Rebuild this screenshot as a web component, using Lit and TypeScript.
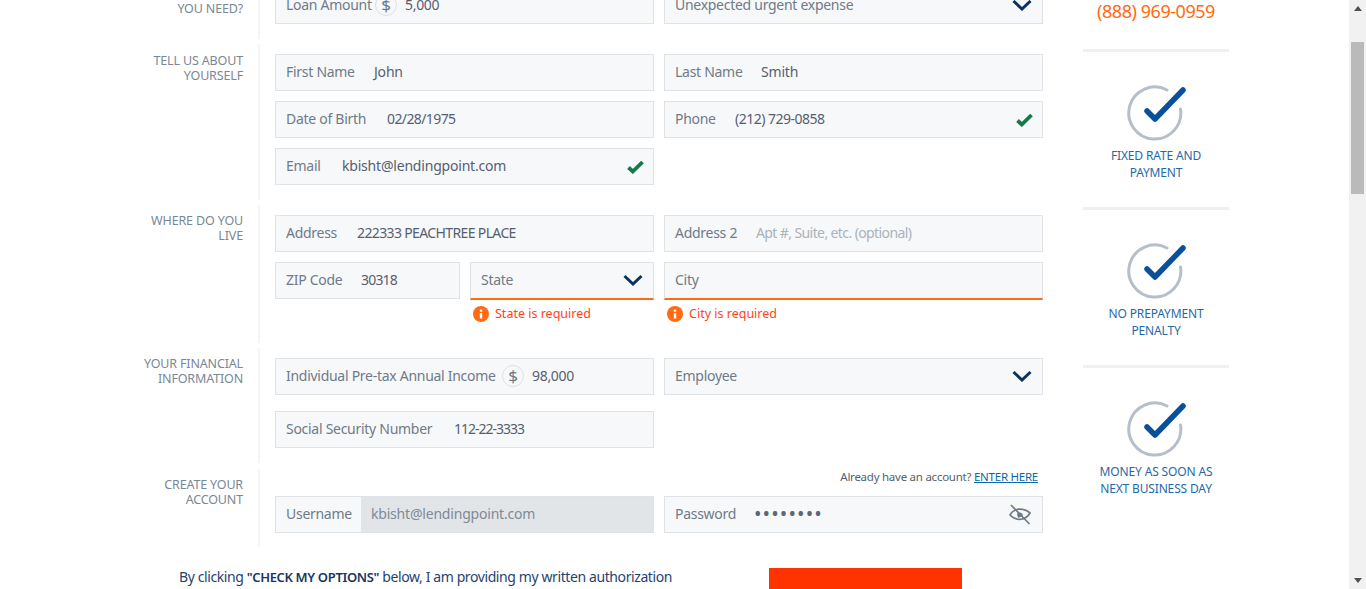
import { LitElement, html, css, svg, nothing } from "lit";
import { customElement } from "lit/decorators.js";

type F = {
  label: string; value?: string; x?: number; ph?: boolean; dollar?: boolean; ok?: boolean;
  select?: boolean; err?: string; eye?: boolean; dots?: boolean; disabled?: boolean; ls?: number;
};

const chevron = html`<svg class="chev" width="20" height="12" viewBox="0 0 20 12"><path d="M1.5 2 L10 10 L18.5 2" fill="none" stroke="#0c335f" stroke-width="3"/></svg>`;
const tick = html`<svg class="tick" width="17" height="14" viewBox="0 0 17 14"><path d="M1.500 7.500 L5.800 11.500 L15.500 2" fill="none" stroke="#147a4a" stroke-width="3.800"/></svg>`;
const eye = html`<svg class="eye" width="22" height="22" viewBox="0 0 22 22" fill="none" stroke="#6f7a85" stroke-width="1.7"><path d="M1 12 C5 5 14 4 21 10 C17 17 8 19 1 12 Z"/><path d="M8 11 C9 9 12 9 13.500 11 L14 13 L9 15 Z" fill="#6f7a85" stroke="none"/><path d="M2 2 L20.500 21"/></svg>`;
const info = html`<svg width="16" height="16" viewBox="0 0 16 16"><circle cx="8" cy="8" r="8" fill="#ff6a13"/><rect x="6.800" y="7" width="2.400" height="5.500" fill="#fff"/><rect x="6.800" y="3.500" width="2.400" height="2.300" fill="#fff"/></svg>`;
const bigCheck = svg`<path d="M42 6 A26 26 0 1 0 55.500 25" fill="none" stroke="#b6bfc9" stroke-width="3" stroke-linecap="round"/><path d="M22 27 L30 35 L58 6" fill="none" stroke="#0a4f9c" stroke-width="5.500" stroke-linecap="round" stroke-linejoin="round"/>`;

@customElement("app-root")
export class AppRoot extends LitElement {
  static styles = css`
    :host { display: block; height: 589px; overflow: hidden; font-family: "Noto Sans", "Open Sans", sans-serif; background: #fff; }
    .page { display: flex; height: 589px; overflow: hidden; }
    .main { width: 1349px; flex: none; overflow: hidden; }
    .content { margin-top: -23px; }
    .top { display: flex; }
    .form { width: 1043px; flex: none; display: flex; flex-direction: column; gap: 5px; }
    .section { display: flex; }
    .s1 { height: 62px; }
    .s2 { height: 156px; }
    .s3 { height: 138px; }
    .s4 { height: 115px; }
    .s5 { height: 78px; margin-top: 1px; }
    .sec-label { width: 243px; flex: none; box-sizing: border-box; padding-top: 9px; text-align: right; font-size: 12.500px; letter-spacing: -0.15px; line-height: 15px; color: #7a8794; text-transform: uppercase; white-space: pre-line; }
    .s3 .sec-label, .s4 .sec-label, .s5 .sec-label { padding-top: 8px; }
    .body { margin-left: 15px; border-left: 2px solid #f3f5f6; padding: 10px 0 0 15px; flex: 1; display: flex; flex-direction: column; gap: 10px; }
    .s4 .body { gap: 16px; }
    .s5 .body { padding-top: 0; gap: 0; }
    .row { display: grid; grid-template-columns: 379px 379px; column-gap: 10px; align-items: start; }
    .split { display: grid; grid-template-columns: 185px 184px; column-gap: 10px; align-items: start; }
    .aux { height: 27px; font-size: 11.500px; letter-spacing: -0.25px; line-height: 16px; color: #56616c; text-align: right; padding-right: 5px; box-sizing: border-box; }
    .aux a { color: #0a6aa8; text-decoration: underline; }
    .field { height: 37px; box-sizing: border-box; border: 1px solid #dfe3e7; background: #f7f8fa; display: flex; align-items: center; position: relative; font-size: 14px; letter-spacing: -0.28px; color: #6f7b88; white-space: nowrap; padding-left: 10px; }
    .field.err { height: 38px; border-bottom: 2px solid #ff6a13; }
    .field .lab { flex: none; line-height: 20px; padding-bottom: 2px; }
    .field .val { color: #565f70; position: absolute; top: 7px; line-height: 20px; }
    .field .val.ph { color: #aab2bb; }
    .field.dis { padding-left: 0; }
    .field.dis .lab { padding-left: 10px; width: 75px; flex: none; }
    .field.dis .val { position: static; flex: 1; height: 100%; background: #e2e5e8; color: #7e8a96; padding-left: 10px; box-sizing: border-box; line-height: 33px; }
    .dollar { position: absolute; top: 6px; width: 22px; height: 22px; box-sizing: border-box; border: 1.500px solid #dde1e5; border-radius: 50%; text-align: center; font-size: 17px; line-height: 19px; letter-spacing: 0; color: #6b7885; }
    .chev { position: absolute; right: 10px; top: 11px; }
    .tick { position: absolute; right: 9px; top: 11px; }
    .eye { position: absolute; right: 11px; top: 6px; }
    .field .val.dots { font-size: 20px; letter-spacing: 1.100px; color: #5d6875; top: 7px; }
    .error { display: flex; align-items: center; gap: 6px; padding: 6px 0 0 3px; font-size: 12.500px; line-height: 16px; color: #ff4517; }
    .side { width: 146px; flex: none; margin-left: 40px; }
    .phone { height: 72px; box-sizing: border-box; padding-top: 21px; text-align: center; font-size: 18px; letter-spacing: -0.45px; line-height: 26px; color: #ff6a13; }
    .perk { height: 158px; box-sizing: border-box; border-top: 3px solid #eef0f1; display: flex; flex-direction: column; align-items: center; padding-top: 32px; font-size: 12px; letter-spacing: -0.15px; line-height: 17px; color: #1f6aa5; text-align: center; white-space: pre-line; text-transform: uppercase; }
    .perk svg { display: block; margin: 0 0 3px 2px; }
    .foot { display: flex; padding-left: 179px; margin-top: 21px; }
    .foot p { margin: 0; width: 590px; flex: none; font-size: 14px; letter-spacing: -0.4px; line-height: 18px; color: #1f4470; white-space: nowrap; }
    .foot b { font-weight: 600; font-size: 13px; letter-spacing: -0.35px; color: #17375e; }
    .btn { width: 193px; height: 30px; background: #ff3300; flex: none; }
    .bar { width: 17px; flex: none; height: 589px; background: #f1f1f1; display: flex; flex-direction: column; align-items: center; box-sizing: border-box; padding-top: 6px; }
    .up { width: 0; height: 0; border: 4px solid transparent; border-top: 0; border-bottom: 5px solid #505050; }
    .thumb { width: 13px; height: 152px; margin-top: 31px; background: #bababa; }
    .down { width: 0; height: 0; border: 4px solid transparent; border-bottom: 0; border-top: 5px solid #505050; margin-top: auto; margin-bottom: 6px; }
  `;

  private field(f: F) {
    const cls = "field" + (f.err ? " err" : "") + (f.disabled ? " dis" : "");
    const pos = f.disabled ? "" : `left:${f.x}px;`;
    const sp = f.ls !== undefined ? `letter-spacing:${f.ls}px;` : "";
    const box = html`<div class=${cls}>
      <span class="lab">${f.label}</span>
      ${f.dollar ? html`<span class="dollar" style="left:${f.x! - 30}px">$</span>` : nothing}
      ${f.value ? html`<span class="val ${f.ph ? "ph" : ""} ${f.dots ? "dots" : ""}" style=${pos + sp}>${f.value}</span>` : nothing}
      ${f.select ? chevron : nothing}
      ${f.ok ? tick : nothing}
      ${f.eye ? eye : nothing}
    </div>`;
    return f.err
      ? html`<div>${box}<div class="error">${info}<span>${f.err}</span></div></div>`
      : box;
  }

  private perk(text: string) {
    return html`<div class="perk"><svg width="65" height="60" viewBox="0 0 65 60">${bigCheck}</svg><span>${text}</span></div>`;
  }

  render() {
    return html`<div class="page">
      <div class="main"><div class="content">
        <div class="top">
          <div class="form">
            <div class="section s1">
              <div class="sec-label">How much do
you need?</div>
              <div class="body"><div class="row">
                ${this.field({ label: "Loan Amount", value: "5,000", x: 129, dollar: true, ls: -0.3 })}
                ${this.field({ label: "Unexpected urgent expense", select: true })}
              </div></div>
            </div>
            <div class="section s2">
              <div class="sec-label">Tell us about
yourself</div>
              <div class="body">
                <div class="row">
                  ${this.field({ label: "First Name", value: "John", x: 98, ls: -0.2 })}
                  ${this.field({ label: "Last Name", value: "Smith", x: 96, ls: -0.2 })}
                </div>
                <div class="row">
                  ${this.field({ label: "Date of Birth", value: "02/28/1975", x: 111, ls: -0.6 })}
                  ${this.field({ label: "Phone", value: "(212) 729-0858", x: 70, ok: true, ls: -0.5 })}
                </div>
                <div class="row">
                  ${this.field({ label: "Email", value: "kbisht@lendingpoint.com", x: 66, ok: true, ls: -0.2 })}
                </div>
              </div>
            </div>
            <div class="section s3">
              <div class="sec-label">Where do you
live</div>
              <div class="body">
                <div class="row">
                  ${this.field({ label: "Address", value: "222333 PEACHTREE PLACE", x: 81, ls: -0.63 })}
                  ${this.field({ label: "Address 2", value: "Apt #, Suite, etc. (optional)", x: 91, ph: true, ls: -0.6 })}
                </div>
                <div class="row">
                  <div class="split">
                    ${this.field({ label: "ZIP Code", value: "30318", x: 85, ls: -0.8 })}
                    ${this.field({ label: "State", select: true, err: "State is required" })}
                  </div>
                  ${this.field({ label: "City", err: "City is required" })}
                </div>
              </div>
            </div>
            <div class="section s4">
              <div class="sec-label">Your financial
information</div>
              <div class="body">
                <div class="row">
                  ${this.field({ label: "Individual Pre-tax Annual Income", value: "98,000", x: 256, dollar: true, ls: -0.3 })}
                  ${this.field({ label: "Employee", select: true })}
                </div>
                <div class="row">
                  ${this.field({ label: "Social Security Number", value: "112-22-3333", x: 178, ls: -1 })}
                </div>
              </div>
            </div>
            <div class="section s5">
              <div class="sec-label">Create your
account</div>
              <div class="body">
                <div class="row">
                  <div></div>
                  <div class="aux">Already have an account? <a>ENTER HERE</a></div>
                </div>
                <div class="row">
                  ${this.field({ label: "Username", value: "kbisht@lendingpoint.com", disabled: true, ls: -0.2 })}
                  ${this.field({ label: "Password", value: "••••••••", x: 89, dots: true, eye: true })}
                </div>
              </div>
            </div>
          </div>
          <div class="side">
            <div class="phone">(888) 969-0959</div>
            ${this.perk("Fixed rate and\npayment")}
            ${this.perk("No prepayment\npenalty")}
            ${this.perk("Money as soon as\nnext business day")}
          </div>
        </div>
        <div class="foot">
          <p>By clicking <b>"CHECK MY OPTIONS"</b> below, I am providing my written authorization</p>
          <div class="btn"></div>
        </div>
      </div></div>
      <div class="bar"><div class="up"></div><div class="thumb"></div><div class="down"></div></div>
    </div>`;
  }
}
